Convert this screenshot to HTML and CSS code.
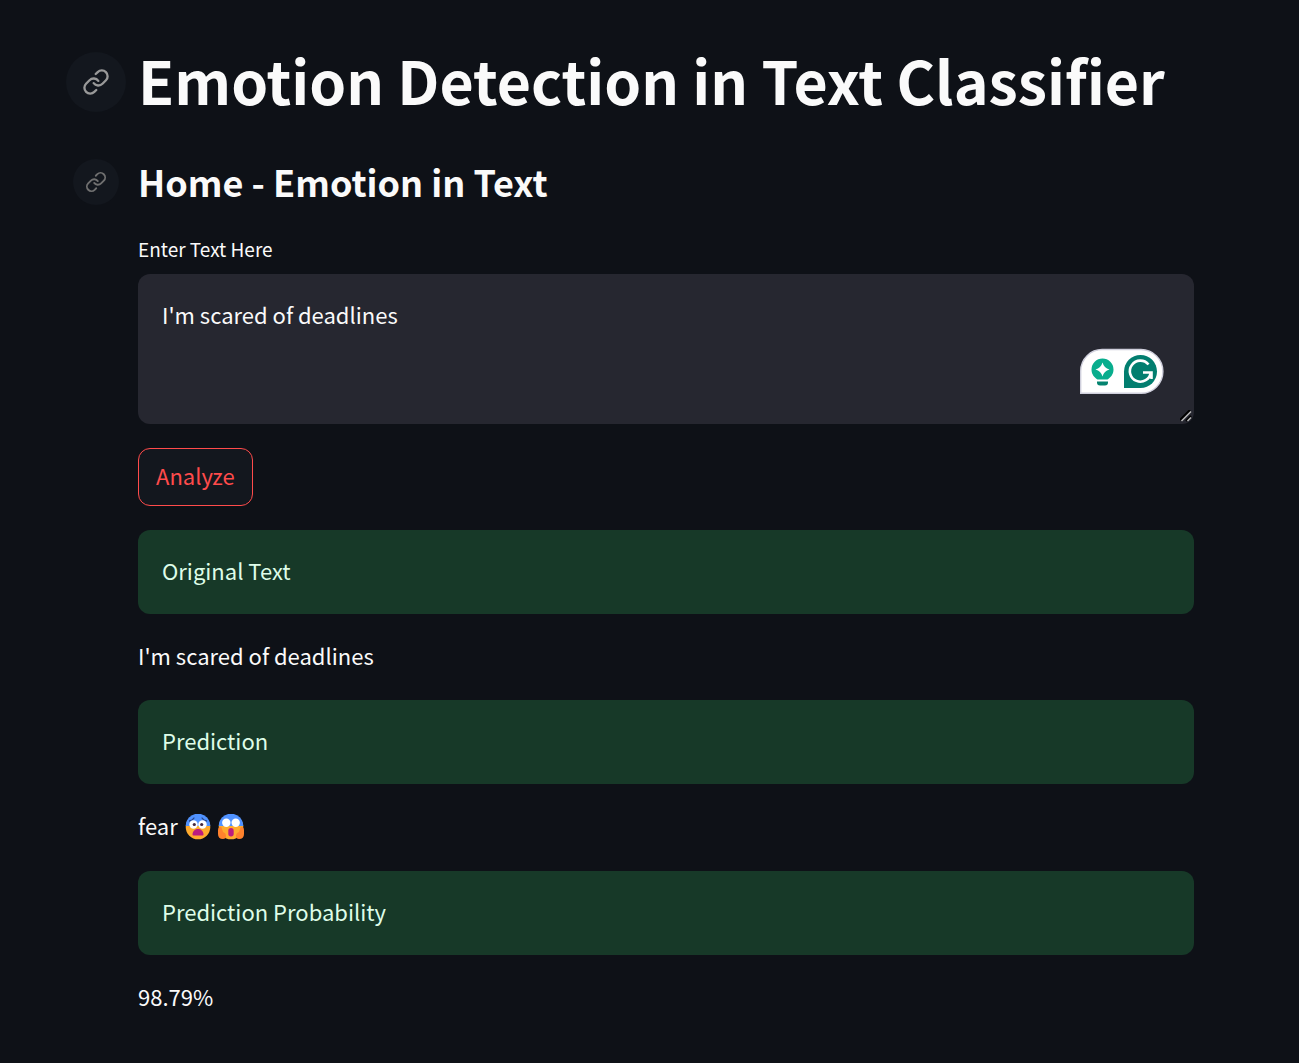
FILE: index.html
```html
<!DOCTYPE html>
<html lang="en">
<head>
<meta charset="utf-8">
<meta name="viewport" content="width=device-width, initial-scale=1">
<title>Emotion Detection in Text Classifier</title>
<link rel="stylesheet" href="styles.css">
</head>
<body>
<main class="page">
  <header class="heading heading-main">
    <a class="anchor anchor-large" href="#title" aria-label="Link to title">
      <svg class="icon icon-large" viewBox="0 0 24 24" aria-hidden="true"><path d="M10 13a5 5 0 0 0 7.540.54l3-3a5 5 0 0 0-7.070-7.07l-1.720 1.710"/><path d="M14 11a5 5 0 0 0-7.540-.54l-3 3a5 5 0 0 0 7.070 7.070l1.710-1.710"/></svg>
    </a>
    <h1 class="title" id="title">Emotion Detection in Text Classifier</h1>
  </header>
  <div class="heading heading-sub">
    <a class="anchor anchor-small" href="#home" aria-label="Link to section">
      <svg class="icon icon-small" viewBox="0 0 24 24" aria-hidden="true"><path d="M10 13a5 5 0 0 0 7.540.54l3-3a5 5 0 0 0-7.070-7.07l-1.720 1.710"/><path d="M14 11a5 5 0 0 0-7.540-.54l-3 3a5 5 0 0 0 7.070 7.070l1.710-1.710"/></svg>
    </a>
    <h2 class="subtitle" id="home">Home - Emotion in Text</h2>
  </div>
  <form class="form" onsubmit="return false">
    <label class="label" for="text">Enter Text Here</label>
    <div class="field">
      <textarea class="textarea" id="text" spellcheck="false">I'm scared of deadlines</textarea>
      <svg class="assistant" viewBox="0 0 84 46" role="img" aria-label="Writing assistant">
        <path d="M.7 45.300V23A21.500 21.500 0 0 1 22.500 1.500H61a21.900 21.900 0 0 1 0 43.800Z" fill="#fff" stroke="#cfcfdc" stroke-width="1.400"/>
        <path d="M22.500 10.500a11 11 0 0 0-11 11c0 5 3 8 6 10h10c3-2 6-5 6-10a11 11 0 0 0-11-11Z" fill="#08ad8d"/>
        <path d="M22.500 14.500q1.500 5.500 7 7q-5.500 1.500-7 7q-1.500-5.500-7-7q5.500-1.500 7-7Z" fill="#fff"/>
        <path d="M17 33.500h11v1q0 3-3 3h-5q-3 0-3-3Z" fill="#04836f"/>
        <path d="M44 40V23.500A16.500 16.500 0 1 1 60.500 40Z" fill="#027e6f"/>
        <path d="M68.500 16.500A10.500 10.500 0 1 0 70.800 24.500M63 24.500H71.500V31" fill="none" stroke="#fff" stroke-width="2.600"/>
      </svg>
      <svg class="grip" viewBox="0 0 12 12" aria-hidden="true"><path d="M0 10L10 0M6 11L11 6" stroke="#000" stroke-width="2"/><path d="M1.500 11L11 1.500M7.500 11L11 7.500" stroke="#b8b8b8" stroke-width="1.500"/></svg>
    </div>
    <button class="button" type="submit">Analyze</button>
  </form>
  <section class="results">
    <p class="alert">Original Text</p>
    <p class="value">I'm scared of deadlines</p>
    <p class="alert">Prediction</p>
    <p class="value value-emotion">fear
      <svg class="emoji" viewBox="0 0 26 26" role="img" aria-label="Fearful face">
        <circle cx="13" cy="13" r="12.300" fill="#ffab2e"/>
        <path d="M.7 12A12.300 12.300 0 0 1 25.300 12Z" fill="#5092ff"/>
        <path d="M4.500 7Q7.500 6.500 9 4M21.500 7Q18.500 6.500 17 4" fill="none" stroke="#29458a" stroke-width="1.300" stroke-linecap="round"/>
        <circle cx="8.500" cy="10.500" r="4.200" fill="#fff"/><circle cx="17.500" cy="10.500" r="4.200" fill="#fff"/>
        <circle cx="9.300" cy="10.500" r="1.600" fill="#43263c"/><circle cx="16.700" cy="10.500" r="1.600" fill="#43263c"/>
        <path d="M7.500 20.500c0-7.500 11-7.500 11 0q0 1-1 1h-9q-1 0-1-1Z" fill="#bb1d80"/>
      </svg>
      <svg class="emoji" viewBox="0 0 26 26" role="img" aria-label="Face screaming in fear">
        <circle cx="13" cy="13" r="12.300" fill="#ffab2e"/>
        <path d="M.7 12A12.300 12.300 0 0 1 25.300 12Z" fill="#5092ff"/>
        <circle cx="8.300" cy="8.700" r="4.200" fill="#fff"/><circle cx="17.700" cy="8.700" r="4.200" fill="#fff"/>
        <rect x="10.300" y="14" width="5.400" height="8.500" rx="2.700" fill="#bb1d80"/>
        <path d="M1.500 13q2-1 2.500 2l1 3q3 1 3 4q0 3-3 3Q0 25 0 20V16q0-2 1.500-3ZM24.500 13q-2-1-2.500 2l-1 3q-3 1-3 4q0 3 3 3Q26 25 26 20V16q0-2-1.500-3Z" fill="#ff822d"/>
      </svg>
    </p>
    <p class="alert">Prediction Probability</p>
    <p class="value">98.79%</p>
  </section>
</main>
</body>
</html>
```
FILE: styles.css
```css
* { box-sizing: border-box; }
body { margin: 0; background: #0e1117; color: #fafafa; font-family: "Noto Sans CJK SC", "Noto Sans", sans-serif; font-size: 22px; line-height: 36px; }
.page { padding: 46px 105px 40px 66px; }
h1, h2, p { margin: 0; }
.heading { display: flex; align-items: center; gap: 12px; }
.anchor { display: flex; align-items: center; justify-content: center; border-radius: 50%; background: #13171e; color: #999; flex: none; }
.anchor-large { width: 60px; height: 60px; }
.anchor-small { width: 46px; height: 46px; margin: 0 7px; color: #707070; }
.icon { fill: none; stroke: currentColor; stroke-width: 2; stroke-linecap: round; stroke-linejoin: round; }
.icon-large { width: 28px; height: 28px; }
.icon-small { width: 22px; height: 22px; }
.title { padding-bottom: 4px; font-size: 59px; line-height: 68px; font-weight: 700; }
.heading-sub { margin-top: 39px; }
.subtitle { padding-bottom: 2px; font-size: 36px; line-height: 48px; font-weight: 600; }
.form, .results { margin-left: 72px; display: flex; flex-direction: column; }
.form { margin-top: 26px; }
.label { font-size: 19px; line-height: 32px; margin-bottom: 9px; }
.field { position: relative; display: flex; }
.textarea { width: 100%; height: 150px; border: 0; border-radius: 12px; padding: 22px 24px; background: #262730; color: #fafafa; font: inherit; outline: 0; resize: none; }
.assistant { position: absolute; right: 30px; bottom: 30px; width: 84px; height: 46px; }
.grip { position: absolute; right: 2px; bottom: 2px; width: 12px; height: 12px; }
.button { align-self: flex-start; margin-top: 24px; height: 58px; padding: 0 17px 4px; border: 1px solid #ff4b4b; border-radius: 12px; background: #13171e; color: #ff4b4b; font: inherit; cursor: pointer; }
.results { margin-top: 24px; gap: 24px; }
.alert { padding: 22px 24px 26px; border-radius: 12px; background: #173928; color: #dffde9; }
.value { padding-bottom: 4px; line-height: 34px; }
.value-emotion { display: flex; align-items: center; gap: 7px; padding-bottom: 5px; }
.emoji { width: 26px; height: 26px; margin-top: 4px; }
```
